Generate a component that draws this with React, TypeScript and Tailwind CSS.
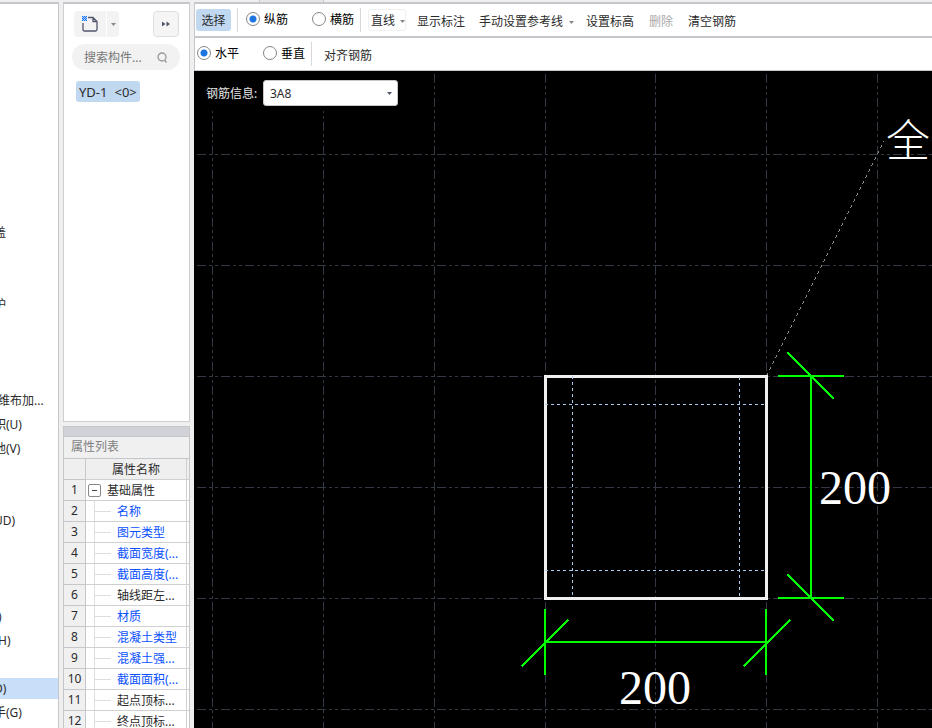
import { useState } from "react";
import type { ReactNode } from "react";

const menuRows: Record<number, { text: string; start: string; active?: boolean }> = {
  9: { text: "盖", start: "-ml-[6px]" },
  12: { text: "护", start: "-ml-[6px]" },
  16: { text: "维布加...", start: "-ml-0.5" },
  17: { text: "积(U)", start: "-ml-[6px]" },
  18: { text: "他(V)", start: "-ml-[6px]" },
  21: { text: "UD)", start: "-ml-[6px]" },
  25: { text: ")", start: "-ml-0.5" },
  26: { text: "H)", start: "-ml-0.5" },
  28: { text: "D)", start: "-ml-[6px]", active: true },
  29: { text: "手(G)", start: "-ml-[6px]" },
};

const properties = [
  { name: "基础属性", group: true, link: false },
  { name: "名称", group: false, link: true },
  { name: "图元类型", group: false, link: true },
  { name: "截面宽度(...", group: false, link: true },
  { name: "截面高度(...", group: false, link: true },
  { name: "轴线距左...", group: false, link: false },
  { name: "材质", group: false, link: true },
  { name: "混凝土类型", group: false, link: true },
  { name: "混凝土强...", group: false, link: true },
  { name: "截面面积(...", group: false, link: true },
  { name: "起点顶标...", group: false, link: false },
  { name: "终点顶标...", group: false, link: false },
];

function Caret({ className = "" }: { className?: string }) {
  return (
    <svg className={className} width="5" height="3" viewBox="0 0 5 3" aria-hidden="true">
      <path d="M0 0h5L2.5 3z" fill="currentColor" />
    </svg>
  );
}

function Radio({ name, label, checked, onPick }: { name: string; label: string; checked: boolean; onPick: () => void }) {
  return (
    <label className="flex items-center gap-1 text-black">
      <input
        type="radio"
        name={name}
        checked={checked}
        onChange={onPick}
        className="size-[14px] appearance-none rounded-full border border-[#858585] bg-white checked:bg-[radial-gradient(circle,#1b74e0_3px,#ffffff_4px)]"
      />
      <span className="pt-0.5">{label}</span>
    </label>
  );
}

function Separator() {
  return <span className="h-6 w-px shrink-0 bg-[#d8d8d8]" />;
}

function Command({ children, disabled }: { children: ReactNode; disabled?: boolean }) {
  return (
    <button type="button" disabled={disabled} className="flex shrink-0 items-center gap-1.5 whitespace-nowrap pt-1 disabled:text-[#aaaaaa]">
      {children}
    </button>
  );
}

function MenuList() {
  return (
    <nav className="min-h-0 w-[59px] flex-1 overflow-hidden border-r border-[#c4c6c8] bg-white">
      <ul>
        {Array.from({ length: 30 }, (_, i) => {
          const row = menuRows[i];
          return (
            <li key={i} className="flex h-6 items-center">
              {row && (
                <button
                  type="button"
                  className={`flex h-[21px] w-full items-center pt-0.5 whitespace-nowrap ${row.active ? "bg-[#c8dffa]" : ""}`}
                >
                  <span className={row.start}>{row.text}</span>
                </button>
              )}
            </li>
          );
        })}
      </ul>
    </nav>
  );
}

function ComponentPanel() {
  return (
    <section className="h-[418px] shrink-0 border-x border-b border-[#cdced2] bg-white pt-[7px] pr-[9px] pl-2">
      <div className="flex items-center pr-px pl-0.5">
        <button type="button" aria-label="新建" className="flex h-[26px] w-8 items-center justify-center rounded-l bg-[#f3f3f3]">
          <svg width="16" height="16" viewBox="0 0 16 16" fill="none" aria-hidden="true">
            <path d="M6 1.500h5l4 4V13.500q0 1.500-1.500 1.500h-11Q1 15 1 13.500V7M11 1.500V5.500h4" stroke="#50566b" strokeWidth="1.300" />
            <path d="M0 0h1v1H0zM2 0h1v1H2zM4 0h1v1H4zM1 1h1v1H1zM3 1h1v1H3zM0 2h1v1H0zM2 2h1v1H2zM4 2h1v1H4zM1 3h1v1H1zM3 3h1v1H3zM0 4h1v1H0zM2 4h1v1H2zM4 4h1v1H4z" fill="#1677f0" />
            <path d="M0 0h5v5H0z" fill="#1677f0" opacity=".35" />
          </svg>
        </button>
        <button type="button" aria-label="新建选项" className="ml-px flex h-[26px] w-3 items-center justify-center rounded-r bg-[#f3f3f3] text-[#888]">
          <Caret />
        </button>
        <button type="button" aria-label="展开" className="ml-auto flex size-[26px] items-center justify-center rounded border border-[#dedede] bg-[#f5f5f5]">
          <svg width="8" height="6" viewBox="0 0 8 6" aria-hidden="true">
            <path d="M0 0.500l3.500 2.500L0 5.500zM4.500 0.500L8 3L4.500 5.500z" fill="#50566b" />
          </svg>
        </button>
      </div>
      <label className="mt-[7px] flex h-[26px] items-center rounded-full bg-[#f2f2f2] pr-3 pl-3">
        <input aria-label="搜索构件" placeholder="搜索构件..." className="w-0 min-w-0 flex-1 bg-transparent pt-0.5 outline-none placeholder:text-[#777777]" />
        <svg width="11" height="11" viewBox="0 0 11 11" fill="none" stroke="#999" strokeWidth="1.300" aria-hidden="true">
          <circle cx="5" cy="5" r="4" />
          <path d="M7.500 8l2 2.500" />
        </svg>
      </label>
      <button type="button" className="mt-[11px] ml-1 flex h-[21px] items-center gap-[7px] rounded-[3px] bg-[#c1d8f1] px-[3px] text-[13px] whitespace-nowrap">
        <span>YD-1</span>
        <span>&lt;0&gt;</span>
      </button>
    </section>
  );
}

function PropertyPanel() {
  return (
    <section className="mt-1 min-h-0 flex-1 overflow-hidden border-x border-t border-[#c4c6ca] bg-white">
      <div className="h-[9px] bg-[#d0d2d8]" />
      <h2 className="flex h-[23px] items-center border-y border-[#c4c6ca] bg-[#f0f0f0] pb-px pl-[7px] text-[#808080]">属性列表</h2>
      <table className="w-full table-fixed border-separate border-spacing-0">
        <colgroup>
          <col className="w-[22px]" />
          <col />
          <col className="w-[2px]" />
        </colgroup>
        <thead>
          <tr className="h-[21px] bg-[#efefef]">
            <th className="border-r border-b border-[#c4c6ca] p-0" />
            <th className="border-r border-b border-[#d0d0d0] p-0 pt-0.5 font-normal">属性名称</th>
            <th className="border-b border-[#d0d0d0] p-0" />
          </tr>
        </thead>
        <tbody>
          {properties.map((p, i) => (
            <tr key={i} className="h-[21px]">
              <th className="border-r border-b border-[#c4c6ca] bg-[#f0f0f0] p-0 font-normal">{i + 1}</th>
              <td className="border-r border-b border-[#d0d0d0] p-0">
                {p.group ? (
                  <div className="flex h-5 items-center gap-[6px] pl-0.5 whitespace-nowrap">
                    <button type="button" aria-label="折叠" className="flex size-[13px] items-center justify-center rounded-[2px] border border-[#888]">
                      <span className="h-px w-[5px] bg-[#444]" />
                    </button>
                    <span className="pt-0.5">{p.name}</span>
                  </div>
                ) : (
                  <div className={`flex h-5 items-center pl-2 whitespace-nowrap ${p.link ? "text-[#0a50ff]" : ""}`}>
                    <span className="h-5 w-px bg-[#dedede]" />
                    <span className="mr-[6px] h-px w-4 bg-[#dedede]" />
                    <span className="pt-0.5">{p.name}</span>
                  </div>
                )}
              </td>
              <td className="border-b border-[#d0d0d0] p-0" />
            </tr>
          ))}
        </tbody>
      </table>
    </section>
  );
}

const columns = [212, 323, 434, 545, 655, 766, 877];
const rows = [154, 265, 376, 487, 598, 709];

function Drawing() {
  return (
    <svg className="block size-full" aria-label="截面图">
      <g transform="translate(-194 -71)">
        <g stroke="#333944" strokeDasharray="9 3 3 3 3 3" shapeRendering="crispEdges">
          {columns.map((x) => (
            <line key={x} x1={x + 0.5} x2={x + 0.5} y1="74" y2="2000" />
          ))}
          {rows.map((y) => (
            <line key={y} x1="197" x2="3000" y1={y + 0.5} y2={y + 0.5} />
          ))}
        </g>
        <path d="M766.500 376L884 141" stroke="#8c8c8c" strokeDasharray="3 3.700" shapeRendering="crispEdges" />
        <rect x="545.500" y="376.500" width="221" height="222" fill="none" stroke="#f0f0f0" strokeWidth="3" shapeRendering="crispEdges" />
        <path
          d="M572.500 376V598M739.500 377V598M545 404.500H767M545 570.500H766"
          fill="none"
          stroke="#a6caf0"
          strokeDasharray="3 3"
          shapeRendering="crispEdges"
        />
        <path
          d="M545 609V675M766 609V675M545 642H766M778 376H844M778 598H844M811 376V598M521.500 666.500L568 620M743.500 666.500L790 620M787.500 352.500L834 399M787.500 574.500L834 621"
          fill="none"
          stroke="#00ff00"
          strokeWidth="2"
          shapeRendering="crispEdges"
        />
        <g fill="#ffffff" className="font-['Liberation_Serif','Noto_Sans_CJK_SC',serif] text-[48px] font-light">
          <text x="619" y="704">200</text>
          <text x="819" y="504">200</text>
          <text x="886" y="157" className="text-[44px]">全</text>
        </g>
      </g>
    </svg>
  );
}

export default function App() {
  const [bar, setBar] = useState("纵筋");
  const [direction, setDirection] = useState("水平");
  return (
    <div className="flex h-screen flex-col overflow-hidden bg-[#efefef] font-['Noto_Sans','Noto_Sans_CJK_SC',sans-serif] text-[12px] leading-4 text-[#2b2b2b]">
      <div className="flex h-0.5 shrink-0 pl-[259px]">
        <div className="w-[65px] border-x border-[#c8c8c8] bg-[#e6e6e6]" />
      </div>
      <div className="flex min-h-0 flex-1">
        <div className="flex w-[59px] shrink-0 flex-col border-t-2 border-[#c5c7cc]">
          <MenuList />
        </div>
        <div className="mx-1 flex w-[127px] shrink-0 flex-col border-t-2 border-[#c5c7cc]">
          <ComponentPanel />
          <PropertyPanel />
        </div>
        <main className="flex min-w-0 flex-1 flex-col border-t-2 border-[#c5c7cc]">
          <div className="flex h-[34px] shrink-0 items-center border-b-2 border-l border-[#c5c7cc] bg-white pl-px">
            <button type="button" className="mr-[6px] h-[22px] w-[35px] shrink-0 rounded-[3px] bg-[#c1d8f1] pt-0.5">选择</button>
            <Separator />
            <div className="flex shrink-0 gap-6 pr-[6px] pb-0.5 pl-2">
              <Radio name="bar" label="纵筋" checked={bar === "纵筋"} onPick={() => setBar("纵筋")} />
              <Radio name="bar" label="横筋" checked={bar === "横筋"} onPick={() => setBar("横筋")} />
            </div>
            <Separator />
            <button type="button" className="ml-[7px] flex h-[22px] shrink-0 items-center gap-[5px] rounded-[3px] border border-[#f0f0f0] pt-0.5 pl-0.5 whitespace-nowrap">
              直线
              <Caret className="text-[#888]" />
            </button>
            <div className="flex items-center pl-[11px]">
              <Command>显示标注</Command>
              <span className="w-[14px]" />
              <Command>
                手动设置参考线
                <Caret className="text-[#888]" />
              </Command>
              <span className="w-3" />
              <Command>设置标高</Command>
              <span className="w-[15px]" />
              <Command disabled>删除</Command>
              <span className="w-[15px]" />
              <Command>清空钢筋</Command>
            </div>
          </div>
          <div className="flex h-[33px] shrink-0 items-center border-b border-l border-[#c5c7cc] bg-white pl-0.5">
            <div className="flex shrink-0 gap-6 pr-[6px] pb-0.5">
              <Radio name="direction" label="水平" checked={direction === "水平"} onPick={() => setDirection("水平")} />
              <Radio name="direction" label="垂直" checked={direction === "垂直"} onPick={() => setDirection("垂直")} />
            </div>
            <Separator />
            <span className="w-3" />
            <Command>对齐钢筋</Command>
          </div>
          <div className="relative min-h-0 flex-1 overflow-hidden bg-black">
            <Drawing />
            <div className="absolute top-0 left-0 flex h-10 items-center bg-black pt-1 pr-1 pl-3">
              <label htmlFor="rebar" className="w-[57px] pt-0.5 whitespace-nowrap text-[#e6e6e6]">钢筋信息:</label>
              <div className="relative">
                <select id="rebar" className="h-[26px] w-[135px] appearance-none rounded-[3px] border border-[#c8c8c8] bg-white pt-0.5 pl-[6px] text-[12px] text-[#2b2b2b]">
                  <option>3A8</option>
                </select>
                <Caret className="pointer-events-none absolute top-3 right-[6px] text-[#50566b]" />
              </div>
            </div>
          </div>
        </main>
      </div>
    </div>
  );
}
